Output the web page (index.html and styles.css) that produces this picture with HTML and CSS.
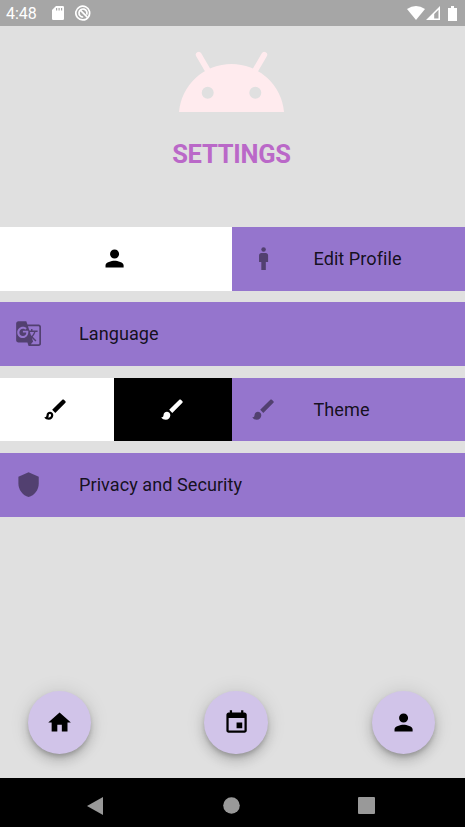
FILE: index.html
```html
<!DOCTYPE html>
<html lang="en">
<head>
<meta charset="utf-8">
<title>Settings</title>
<link rel="stylesheet" href="styles.css">
</head>
<body>
<svg class="defs" width="0" height="0">
  <symbol id="person" viewBox="0 0 24 24"><path d="M12 12c2.21 0 4-1.79 4-4s-1.79-4-4-4-4 1.790-4 4 1.790 4 4 4zm0 2c-2.670 0-8 1.340-8 4v2h16v-2c0-2.660-5.330-4-8-4z"/></symbol>
  <symbol id="brush" viewBox="0 0 24 24"><path d="M7 14c-1.660 0-3 1.340-3 3 0 1.310-1.160 2-2 2 .92 1.220 2.490 2 4 2 2.210 0 4-1.790 4-4 0-1.660-1.340-3-3-3zm13.710-9.370l-1.340-1.340c-.39-.39-1.020-.39-1.410 0L9 12.250 11.750 15l8.960-8.960c.39-.39.39-1.020 0-1.410z"/></symbol>
</svg>
<div class="screen">
  <header class="status">
    <span class="time">4:48</span>
    <svg class="sd" viewBox="0 0 12 14"><path fill-rule="evenodd" d="M4 0h6.700Q12 0 12 1.300v11.400Q12 14 10.700 14H1.300Q0 14 0 12.700V4zM4 2v2.500h1.200V2zM6.500 2v2.500h1.200V2zM9 2v2.500h1.200V2z"/></svg>
    <svg class="badge" viewBox="0 0 16 16"><path d="M13.200 12.200A6.900 6.900 0 1 0 8 14.900Q11.500 14.900 13.200 12.200" fill="none" stroke="#fff" stroke-width="1.700"/><path d="M11.600 9.700A4 4 0 1 0 8.200 12M5.800 5.700l6.500 6.500" fill="none" stroke="#fff" stroke-width="1.700"/></svg>
    <span class="space"></span>
    <svg class="wifi" viewBox="0 0 18 14"><path d="M0 3Q9-3 18 3L9 14z"/></svg>
    <svg class="signal" viewBox="0 0 14 14"><path fill-rule="evenodd" d="M14 0v14H0zM8.200 8v4.500h4.300V3.700z"/></svg>
    <svg class="battery" viewBox="0 0 9 15"><path d="M3 0h3v2h3v13H0V2h3z"/></svg>
  </header>

  <main class="content">
    <svg class="robot" viewBox="179 51 105 61">
      <path fill-rule="evenodd" d="M179 112A52.700 52.700 0 0 1 284 112zM201.700 92.700a6 6 0 1 0 12 0a6 6 0 1 0-12 0zM249.300 92.700a6 6 0 1 0 12 0a6 6 0 1 0-12 0z"/>
      <path class="antenna" d="M198.700 54.700l9.300 16M264.300 54.700l-9.300 16"/>
    </svg>
    <h1>SETTINGS</h1>

    <div class="list">
      <div class="row">
        <div class="action wide"><svg class="icon"><use href="#person"/></svg></div>
        <div class="tile">
          <svg class="icon" viewBox="0 0 24 24"><circle cx="12" cy="4" r="2"/><path d="M14 7h-4c-1.100 0-2 .9-2 2v6h2v7h4v-7h2V9c0-1.100-.9-2-2-2z"/></svg>
          <span>Edit Profile</span>
        </div>
      </div>
      <div class="row">
        <div class="tile">
          <svg class="icon" viewBox="0 0 24 24"><path d="M21 4H11l-1-3H3c-1.100 0-2 .9-2 2v15c0 1.100.9 2 2 2h8l1 3h9c1.100 0 2-.9 2-2V6c0-1.100-.9-2-2-2zM7 16c-2.760 0-5-2.240-5-5s2.240-5 5-5c1.350 0 2.480.5 3.350 1.300L9.030 8.570c-.38-.36-1.040-.78-2.030-.78-1.740 0-3.150 1.440-3.150 3.210S5.260 14.210 7 14.210c2.010 0 2.840-1.440 2.920-2.410v-.79H7V9.400h4.680c.07.31.12.61.12 1.020C11.800 13.970 9.320 16 7 16zm6.170-5.420h3.700c-.43 1.250-1.110 2.430-2.050 3.470-.31-.35-.6-.72-.86-1.100l-.79-2.370zm8.330 9.920c0 .55-.45 1-1 1H14l2-2.500-1.040-3.100 3.100 3.100.92-.92-3.300-3.250.02-.02c1.130-1.250 1.930-2.690 2.400-4.220H20v-1.300h-4.530V8h-1.290v1.290h-1.440L11.460 5.500h9.040c.55 0 1 .45 1 1v14z"/></svg>
          <span>Language</span>
        </div>
      </div>
      <div class="row short">
        <div class="action light"><svg class="icon" viewBox="0 0 24 24"><path fill-rule="evenodd" d="M7 16c.55 0 1 .45 1 1 0 1.100-.9 2-2 2-.17 0-.33-.02-.5-.05.31-.55.5-1.210.5-1.950 0-.55.45-1 1-1zM18.670 3c-.26 0-.51.1-.71.29L9 12.250 11.750 15l8.960-8.960c.39-.39.39-1.020 0-1.410l-1.340-1.340c-.2-.2-.45-.29-.7-.29zM7 14c-1.660 0-3 1.340-3 3 0 1.310-1.160 2-2 2 .92 1.220 2.490 2 4 2 2.210 0 4-1.790 4-4 0-1.660-1.340-3-3-3z"/></svg></div>
        <div class="action dark"><svg class="icon"><use href="#brush"/></svg></div>
        <div class="tile">
          <svg class="icon"><use href="#brush"/></svg>
          <span>Theme</span>
        </div>
      </div>
      <div class="row">
        <div class="tile">
          <svg class="icon" viewBox="0 0 24 24"><path d="M12 1L3 5v6c0 5.550 3.840 10.740 9 12 5.160-1.260 9-6.450 9-12V5l-9-4z"/></svg>
          <span>Privacy and Security</span>
        </div>
      </div>
    </div>

    <div class="fabs">
      <div class="fab"><svg class="icon" viewBox="0 0 24 24"><path d="M10 20v-6h4v6h5v-8h3L12 3 2 12h3v8z"/></svg></div>
      <div class="fab"><svg class="icon" viewBox="0 0 24 24"><path d="M17 12h-5v5h5v-5zM16 1v2H8V1H6v2H5c-1.110 0-1.990.9-1.990 2L3 19c0 1.100.89 2 2 2h14c1.100 0 2-.9 2-2V5c0-1.100-.9-2-2-2h-1V1h-2zm3 18H5V8h14v11z"/></svg></div>
      <div class="fab"><svg class="icon"><use href="#person"/></svg></div>
    </div>
  </main>

  <nav class="navbar">
    <svg viewBox="0 0 20 20"><path d="M17 1v18L1 10z"/></svg>
    <svg viewBox="0 0 20 20"><circle cx="9.500" cy="9.500" r="8.300"/></svg>
    <svg viewBox="0 0 20 20"><rect x="1" y="1" width="17" height="17" rx="1"/></svg>
  </nav>
</div>
</body>
</html>
```
FILE: styles.css
```css
* { box-sizing: border-box; }
body { margin: 0; font-family: Roboto, sans-serif; }
svg { display: block; flex: none; }
.defs { position: absolute; }
.screen {
  width: 465px;
  height: 827px;
  display: flex;
  flex-direction: column;
  background: #e0e0e0;
  overflow: hidden;
}
.status {
  height: 26px;
  flex: none;
  display: flex;
  align-items: center;
  padding: 0 8px 0 6px;
  background: #a6a6a6;
  color: #fff;
  fill: #fff;
}
.time { width: 46px; font-size: 16px; line-height: 24px; padding-top: 2px; }
.sd { width: 12px; height: 14px; }
.badge { width: 16px; height: 16px; margin-left: 11px; }
.space { flex: 1; }
.wifi { width: 18px; height: 14px; }
.signal { width: 14px; height: 14px; margin-left: 1px; }
.battery { width: 9px; height: 15px; margin-left: 8px; }

.content { flex: 1; display: flex; flex-direction: column; align-items: center; }
.robot { width: 105px; height: 61px; margin: 25px 2px 0 0; fill: #ffebee; }
.antenna { stroke: #ffebee; stroke-width: 5.800; stroke-linecap: round; fill: none; }
h1 {
  margin: 27px 2px 0 0;
  font-size: 25.500px;
  line-height: 30px;
  font-weight: 700;
  letter-spacing: -.25px;
  color: #ba68c8;
}
.list { width: 100%; margin-top: 58px; display: flex; flex-direction: column; gap: 11px; }
.row { display: flex; height: 64px; }
.short { height: 63px; margin: 1px 0; }
.icon { width: 27.150px; height: 27.150px; }
.action { display: flex; align-items: center; justify-content: center; flex: none; }
.wide { width: 234.500px; margin-left: -3px; background: #fff; }
.light { width: 117px; margin-left: -3px; background: #fff; }
.dark { width: 117.500px; background: #000; fill: #fff; }
.tile {
  flex: 1;
  display: flex;
  align-items: center;
  gap: 36.500px;
  padding-left: 18.400px;
  background: #9575cd;
  font-size: 18.100px;
  letter-spacing: .04px;
  color: rgba(0, 0, 0, .87);
  white-space: nowrap;
}
.tile span { padding-bottom: 2px; }
.short .tile span { padding-bottom: 1px; }
.row .tile:first-child { padding-left: 15.400px; }
.tile .icon { fill: rgba(0, 0, 0, .45); }
.fabs {
  width: 100%;
  margin: auto 0 23.700px;
  padding: 0 29.700px 0 27.700px;
  display: flex;
}
.fab {
  width: 63.800px;
  height: 63.800px;
  border-radius: 50%;
  display: flex;
  align-items: center;
  justify-content: center;
  background: #d1c4e9;
  box-shadow: 0 3.400px 5.600px -1px rgba(0, 0, 0, .2), 0 6.800px 11.300px rgba(0, 0, 0, .14), 0 1px 20px rgba(0, 0, 0, .12);
}
.fab:nth-child(2) { margin-left: 113px; }
.fab:last-child { margin-left: auto; }
.navbar {
  height: 49px;
  flex: none;
  display: flex;
  align-items: center;
  justify-content: space-between;
  padding: 6px 88px 0 86px;
  background: #000;
  fill: #999;
}
.navbar svg { width: 20px; height: 20px; }
```
